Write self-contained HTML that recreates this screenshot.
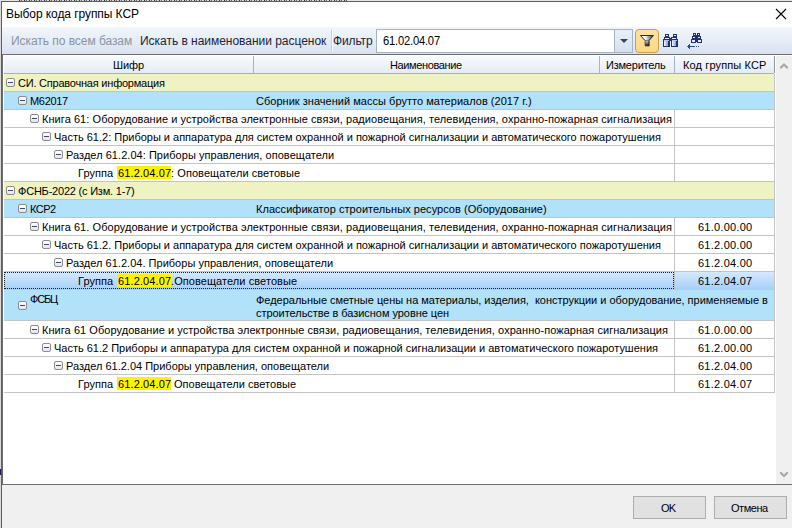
<!DOCTYPE html>
<html><head><meta charset="utf-8">
<style>
*{margin:0;padding:0;box-sizing:border-box}
html,body{width:792px;height:528px;overflow:hidden;background:#d9d9d9}
body{position:relative;font-family:"Liberation Sans",sans-serif;color:#000}
.a{position:absolute}
#dlg{position:absolute;left:1px;top:1px;width:800px;height:540px;border-left:1px solid #5e5e5e;border-top:1px solid #5e5e5e;background:#fff}
.title{left:5px;top:6px;font-size:12px;line-height:16px;color:#000;white-space:nowrap}
#tb{left:2px;top:27px;width:790px;height:27px;background:linear-gradient(#f2f6fb,#e6edf6 50%,#d8e2ef)}
.tbt{font-size:12px;line-height:16px;white-space:nowrap;top:33px}
#grid{left:2px;top:54px;width:790px;height:431px;border-top:1px solid #6e6e6e;border-left:1px solid #6e6e6e;border-bottom:1px solid #6e6e6e;background:#fff}
.hd{top:56px;height:17px;padding-top:1px;background:linear-gradient(#f8fafd,#e5ecf6);font-size:11px;line-height:17px;text-align:center;color:#000;white-space:nowrap}
.hl{background:#aab3c1;width:1px}
.r{left:4px;width:770px;height:17px;font-size:11px;line-height:17px;white-space:nowrap;overflow:hidden}
.ln{left:4px;width:770px;height:1px;background:#c3c3c3}
.vl{width:1px;background:#c3c3c3}
.vb{background:#c5dbe6}
.yel{background:#eff2c3}
.blu{background:#b1e2fa}
.box{position:absolute;width:9px;height:9px;border:1px solid #8c8c8c;border-radius:2px;background:linear-gradient(#fff,#dfe6f4)}
.box:after{content:"";position:absolute;left:1px;top:3px;width:5px;height:1px;background:#3d4a6b}
.t{position:absolute;top:1px}
.hi{position:absolute;background:#fff200}
.code{position:absolute;left:671px;width:100px;text-align:center;top:1px}
.sel{background:linear-gradient(#d4e9fd,#a6cefa)}
.focus{position:absolute;left:0;top:0;width:670px;height:17px;border:1px dotted #1a1a1a}
.nm2{line-height:13px;top:4px!important}
.ht{top:57px;font-size:11px;line-height:17px;white-space:nowrap;color:#000}
.bt{top:500px;font-size:11px;line-height:17px;white-space:nowrap;color:#000}
.btn{top:496px;width:73px;height:23px;border:1px solid #adadad;background:#e1e1e1;font-size:12px;line-height:21px;text-align:center;color:#000}
</style></head><body>
<!-- background strip -->
<div class="a" style="left:0;top:0;width:792px;height:1px;background:#e4e4e4"></div>
<div class="a" style="left:19px;top:0;width:328px;height:1px;background:repeating-linear-gradient(90deg,#3a3a3a 0 1px,#c8c8c8 1px 2px,#6a6a6a 2px 3px,#d8d8d8 3px 5px)"></div>
<div id="dlg"></div>
<div class="a" style="left:0;top:469px;width:1px;height:6px;background:#1c1a5a"></div>
<div class="a title" style="left:6px;letter-spacing:-0.07px">Выбор кода группы КСР</div>
<svg class="a" style="left:775px;top:8px" width="12" height="12" viewBox="0 0 12 12"><path d="M1 1L11 11M11 1L1 11" stroke="#000" stroke-width="1.1" fill="none"/></svg>

<div id="tb" class="a"></div>
<div class="a tbt" style="left:11px;letter-spacing:-0.05px;color:#8a93a3">Искать по всем базам</div>
<div class="a tbt" style="left:140px;letter-spacing:-0.03px;color:#1c2437">Искать в наименовании расценок</div>
<div class="a" style="left:331px;top:30px;width:1px;height:22px;background:#c5cfdd"></div>
<div class="a" style="left:332px;top:30px;width:1px;height:22px;background:#fafcff"></div>
<div class="a tbt" style="left:333px;letter-spacing:-0.13px;color:#1c2437">Фильтр</div>
<div class="a" style="left:376px;top:29px;width:257px;height:24px;border:1px solid #a5b3c8;background:#fff"></div>
<div class="a tbt" style="left:383px;letter-spacing:-0.2px;transform:scaleX(0.93);transform-origin:0 0;color:#000">61.02.04.07</div>
<div class="a" style="left:614px;top:29px;width:19px;height:24px;border:1px solid #a5b3c8;background:linear-gradient(#e9eff8,#d6e0ee)"></div>
<svg class="a" style="left:620px;top:39px" width="8" height="4" viewBox="0 0 8 4"><path d="M0 0H8L4 4Z" fill="#36455c"/></svg>
<div class="a" style="left:635px;top:29px;width:24px;height:24px;border:1px solid #c99d52;border-radius:4px;background:linear-gradient(#fde2a0,#fbd785)"></div>
<svg class="a" style="left:638px;top:33px" width="18" height="15" viewBox="0 0 18 15"><defs><linearGradient id="fg" x1="0" x2="1" y1="0" y2="0"><stop offset="0" stop-color="#ffffff"/><stop offset="0.4" stop-color="#f0f0f0"/><stop offset="0.7" stop-color="#8a8a8a"/><stop offset="1" stop-color="#202020"/></linearGradient><linearGradient id="fs" x1="0" x2="0" y1="0" y2="1"><stop offset="0" stop-color="#d0d0d0"/><stop offset="0.6" stop-color="#707070"/><stop offset="1" stop-color="#101010"/></linearGradient></defs><path d="M2.5 2.5H15.5L11 7.5H7Z" fill="url(#fg)" stroke="#2a2a2a" stroke-width="1" stroke-linejoin="round"/><path d="M7 7.5H11V12.5H7Z" fill="url(#fs)"/><path d="M11 7.5V12.8H7" fill="none" stroke="#1a1a1a" stroke-width="1.1"/><path d="M7 7.5V12.5" stroke="#555" stroke-width="0.8"/></svg>
<svg class="a" style="left:662px;top:33px" width="17" height="15" viewBox="0 0 17 15" shape-rendering="crispEdges"><defs><linearGradient id="bg1" x1="0" x2="1"><stop offset="0" stop-color="#f4f7fd"/><stop offset="1" stop-color="#8e9dd0"/></linearGradient></defs><g fill="#1f3272"><rect x="3" y="1" width="4" height="5"/><rect x="2" y="4" width="6" height="2"/><rect x="1" y="6" width="7" height="8"/><rect x="11" y="1" width="4" height="5"/><rect x="9" y="4" width="6" height="2"/><rect x="9" y="6" width="7" height="8"/><rect x="7" y="5" width="2" height="3"/></g><g fill="#e8eefa"><rect x="4" y="2" width="2" height="1"/><rect x="12" y="2" width="2" height="1"/><rect x="3" y="5" width="4" height="1"/><rect x="10" y="5" width="4" height="1"/><rect x="2" y="7" width="5" height="1" fill="#b8c4e8"/><rect x="10" y="7" width="5" height="1" fill="#b8c4e8"/></g><rect x="2" y="8" width="4" height="5" fill="url(#bg1)"/><rect x="10" y="8" width="4" height="5" fill="url(#bg1)"/></svg>
<svg class="a" style="left:686px;top:32px" width="17" height="17" viewBox="0 0 17 17" shape-rendering="crispEdges"><g fill="#1f3272"><rect x="7" y="1" width="3" height="3"/><rect x="6" y="4" width="4" height="3"/><rect x="5" y="7" width="5" height="4"/><rect x="11" y="1" width="3" height="3"/><rect x="11" y="4" width="4" height="3"/><rect x="11" y="7" width="5" height="4"/><rect x="10" y="3" width="1" height="7"/></g><g fill="#e4eaf8"><rect x="8" y="2" width="1" height="1"/><rect x="12" y="2" width="1" height="1"/><rect x="7" y="5" width="2" height="1"/><rect x="12" y="5" width="2" height="1"/><rect x="6" y="8" width="3" height="2"/><rect x="12" y="8" width="3" height="2"/></g><g fill="#2a4a9a"><rect x="3" y="14" width="6" height="1"/><rect x="2" y="13" width="2" height="3"/><rect x="3" y="12" width="1" height="5"/><rect x="10" y="14" width="1" height="1"/><rect x="12" y="14" width="1" height="1"/></g><rect x="1" y="14" width="1" height="1" fill="#5a72b8"/></svg>
<div id="grid" class="a"></div>
<!-- header -->
<div class="a hd" style="left:4px;width:249px"></div><div class="a ht" style="left:113px;letter-spacing:-0.09px">Шифр</div>
<div class="a hl" style="left:253px;top:56px;height:17px"></div>
<div class="a hd" style="left:254px;width:345px"></div><div class="a ht" style="left:390px;letter-spacing:-0.38px">Наименование</div>
<div class="a hl" style="left:599px;top:56px;height:17px"></div>
<div class="a hd" style="left:600px;width:74px"></div><div class="a ht" style="left:606px;letter-spacing:-0.22px">Измеритель</div>
<div class="a hl" style="left:674px;top:56px;height:17px"></div>
<div class="a hd" style="left:675px;width:99px"></div><div class="a ht" style="left:683px;letter-spacing:0.13px">Код группы КСР</div>
<div class="a hl" style="left:774px;top:56px;height:17px;background:#8d96a6"></div>
<div class="a" style="left:4px;top:73px;width:770px;height:1px;background:#a7b0be"></div>
<!-- scrollbar -->
<div class="a" style="left:776px;top:56px;width:16px;height:428px;background:#f0f0f0"></div>
<svg class="a" style="left:780px;top:62px" width="8" height="7" viewBox="0 0 8 7"><path d="M0 5L4 1L8 5V6.5H6.5L4 4L1.5 6.5H0Z" fill="#a8a8a8"/></svg>
<svg class="a" style="left:780px;top:472px" width="8" height="7" viewBox="0 0 8 7"><path d="M0 1.5L4 5.5L8 1.5V0H6.5L4 2.5L1.5 0H0Z" fill="#a8a8a8"/></svg>

<div id="rows">
<div class="a r yel" style="top:74px;height:17px">
<div class="box" style="left:2px;top:4px"></div>
<div class="t" style="left:14px;letter-spacing:-0.219px">СИ. Справочная информация</div>
</div>
<div class="a ln" style="top:91px"></div>
<div class="a r blu" style="top:92px;height:17px">
<div class="box" style="left:14px;top:4px"></div>
<div class="t" style="left:26px;letter-spacing:-0.327px">М62017</div>
<div class="t nm" style="left:252px;letter-spacing:0.026px">Сборник значений массы брутто материалов (2017 г.)</div>
</div>
<div class="a vl vb" style="left:253px;top:92px;height:17px"></div>
<div class="a ln" style="top:109px"></div>
<div class="a r " style="top:110px;height:17px">
<div class="box" style="left:26px;top:4px"></div>
<div class="t" style="left:38px;letter-spacing:0.062px">Книга 61: Оборудование и устройства электронные связи, радиовещания, телевидения, охранно-пожарная сигнализация</div>
</div>
<div class="a vl" style="left:674px;top:110px;height:17px"></div>
<div class="a ln" style="top:127px"></div>
<div class="a r " style="top:128px;height:17px">
<div class="box" style="left:38px;top:4px"></div>
<div class="t" style="left:50px;letter-spacing:-0.005px">Часть 61.2: Приборы и аппаратура для систем охранной и пожарной сигнализации и автоматического пожаротушения</div>
</div>
<div class="a vl" style="left:674px;top:128px;height:17px"></div>
<div class="a ln" style="top:145px"></div>
<div class="a r " style="top:146px;height:17px">
<div class="box" style="left:50px;top:4px"></div>
<div class="t" style="left:62px;letter-spacing:0.043px">Раздел 61.2.04: Приборы управления, оповещатели</div>
</div>
<div class="a vl" style="left:674px;top:146px;height:17px"></div>
<div class="a ln" style="top:163px"></div>
<div class="a r " style="top:164px;height:17px">
<div class="t" style="left:74px;letter-spacing:0.051px">Группа</div>
<div class="hi" style="left:113px;top:2px;width:54px;height:13px"></div>
<div class="t" style="left:114px;letter-spacing:0.125px">61.2.04.07</div>
<div class="t" style="left:167px;letter-spacing:0.069px">: Оповещатели световые</div>
</div>
<div class="a vl" style="left:674px;top:164px;height:17px"></div>
<div class="a ln" style="top:181px"></div>
<div class="a r yel" style="top:182px;height:17px">
<div class="box" style="left:2px;top:4px"></div>
<div class="t" style="left:14px;letter-spacing:-0.21px">ФСНБ-2022 (с Изм. 1-7)</div>
</div>
<div class="a ln" style="top:199px"></div>
<div class="a r blu" style="top:200px;height:17px">
<div class="box" style="left:14px;top:4px"></div>
<div class="t" style="left:26px;letter-spacing:-0.522px">КСР2</div>
<div class="t nm" style="left:252px;letter-spacing:0.04px">Классификатор строительных ресурсов (Оборудование)</div>
</div>
<div class="a vl vb" style="left:253px;top:200px;height:17px"></div>
<div class="a ln" style="top:217px"></div>
<div class="a r " style="top:218px;height:17px">
<div class="box" style="left:26px;top:4px"></div>
<div class="t" style="left:38px;letter-spacing:0.062px">Книга 61. Оборудование и устройства электронные связи, радиовещания, телевидения, охранно-пожарная сигнализация</div>
<div class="t" style="left:694px;letter-spacing:0.236px">61.0.00.00</div>
</div>
<div class="a vl" style="left:674px;top:218px;height:17px"></div>
<div class="a ln" style="top:235px"></div>
<div class="a r " style="top:236px;height:17px">
<div class="box" style="left:38px;top:4px"></div>
<div class="t" style="left:50px;letter-spacing:-0.005px">Часть 61.2. Приборы и аппаратура для систем охранной и пожарной сигнализации и автоматического пожаротушения</div>
<div class="t" style="left:694px;letter-spacing:0.236px">61.2.00.00</div>
</div>
<div class="a vl" style="left:674px;top:236px;height:17px"></div>
<div class="a ln" style="top:253px"></div>
<div class="a r " style="top:254px;height:17px">
<div class="box" style="left:50px;top:4px"></div>
<div class="t" style="left:62px;letter-spacing:0.021px">Раздел 61.2.04. Приборы управления, оповещатели</div>
<div class="t" style="left:694px;letter-spacing:0.236px">61.2.04.00</div>
</div>
<div class="a vl" style="left:674px;top:254px;height:17px"></div>
<div class="a ln" style="top:271px"></div>
<div class="a r sel" style="top:272px;height:18px">
<div class="t" style="left:74px;letter-spacing:0.051px">Группа</div>
<div class="hi" style="left:113px;top:2px;width:54px;height:13px"></div>
<div class="t" style="left:114px;letter-spacing:0.125px">61.2.04.07</div>
<div class="t" style="left:167px;letter-spacing:0.075px">.Оповещатели световые</div>
<div class="t" style="left:694px;letter-spacing:0.236px">61.2.04.07</div>
<div class="focus"></div>
</div>
<div class="a vl" style="left:674px;top:272px;height:17px"></div>
<div class="a r blu" style="top:290px;height:30px">
<div class="box" style="left:14px;top:11px"></div>
<div class="t" style="left:26px;top:1px;letter-spacing:-1.175px">ФСБЦ</div>
<div class="t nm" style="left:252px;top:2px;letter-spacing:-0.022px">Федеральные сметные цены на материалы, изделия, &nbsp;конструкции и оборудование, применяемые в</div>
<div class="t nm" style="left:252px;top:15px;letter-spacing:-0.047px">строительстве в базисном уровне цен</div>
</div>
<div class="a vl vb" style="left:253px;top:290px;height:30px"></div>
<div class="a ln" style="top:320px"></div>
<div class="a r " style="top:321px;height:17px">
<div class="box" style="left:26px;top:4px"></div>
<div class="t" style="left:38px;letter-spacing:0.054px">Книга 61 Оборудование и устройства электронные связи, радиовещания, телевидения, охранно-пожарная сигнализация</div>
<div class="t" style="left:694px;letter-spacing:0.236px">61.0.00.00</div>
</div>
<div class="a vl" style="left:674px;top:321px;height:17px"></div>
<div class="a ln" style="top:338px"></div>
<div class="a r " style="top:339px;height:17px">
<div class="box" style="left:38px;top:4px"></div>
<div class="t" style="left:50px;letter-spacing:-0.004px">Часть 61.2 Приборы и аппаратура для систем охранной и пожарной сигнализации и автоматического пожаротушения</div>
<div class="t" style="left:694px;letter-spacing:0.236px">61.2.00.00</div>
</div>
<div class="a vl" style="left:674px;top:339px;height:17px"></div>
<div class="a ln" style="top:356px"></div>
<div class="a r " style="top:357px;height:17px">
<div class="box" style="left:50px;top:4px"></div>
<div class="t" style="left:62px;letter-spacing:0.0px">Раздел 61.2.04 Приборы управления, оповещатели</div>
<div class="t" style="left:694px;letter-spacing:0.236px">61.2.04.00</div>
</div>
<div class="a vl" style="left:674px;top:357px;height:17px"></div>
<div class="a ln" style="top:374px"></div>
<div class="a r " style="top:375px;height:17px">
<div class="t" style="left:74px;letter-spacing:0.051px">Группа</div>
<div class="hi" style="left:113px;top:2px;width:54px;height:13px"></div>
<div class="t" style="left:114px;letter-spacing:0.125px">61.2.04.07</div>
<div class="t" style="left:170px;letter-spacing:0.03px">Оповещатели световые</div>
<div class="t" style="left:694px;letter-spacing:0.236px">61.2.04.07</div>
</div>
<div class="a vl" style="left:674px;top:375px;height:17px"></div>
<div class="a ln" style="top:392px"></div>
<div class="a vl" style="left:774px;top:74px;height:319px"></div>
</div><!--/rows-->

<!-- bottom -->
<div class="a" style="left:2px;top:485px;width:790px;height:43px;background:#f0f0f0"></div>
<div class="a btn" style="left:633px"></div><div class="a bt" style="left:661px;letter-spacing:-0.9px">OK</div>
<div class="a btn" style="left:714px"></div><div class="a bt" style="left:731px;letter-spacing:-0.47px">Отмена</div>
</body></html>
